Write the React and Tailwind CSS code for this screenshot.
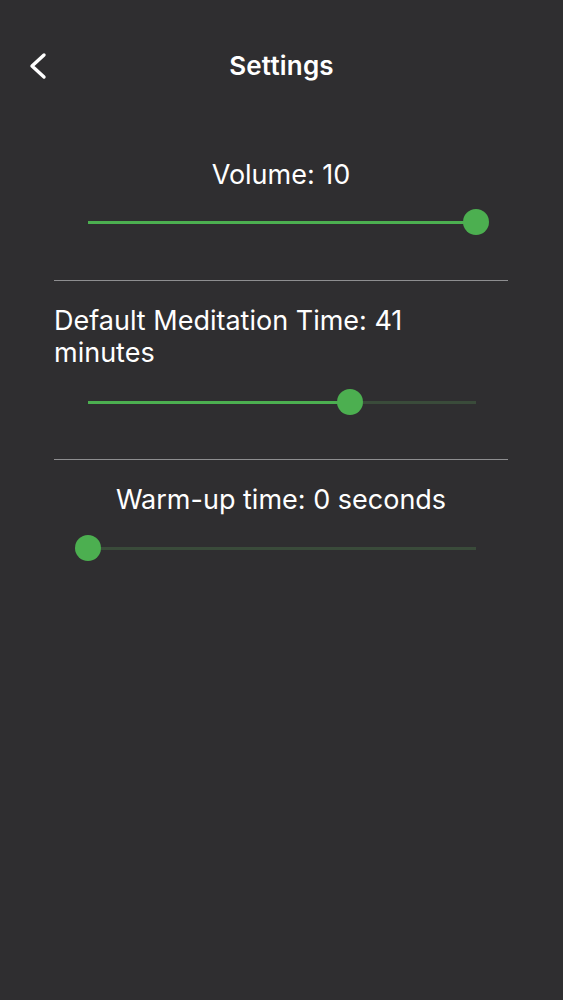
const font = { fontFamily: 'Inter, "Noto Sans", sans-serif' };

function Slider({ value }) {
  return (
    <div className="pl-[34px] pr-[32px]">
      <div className="relative flex h-[28px] items-center">
        <div className="flex h-[3px] w-full">
          <div className="h-full bg-[#4caf50]" style={{ width: `${value * 100}%` }} />
          <div className="h-full flex-1 bg-[#3a4b3a]" />
        </div>
        <span
          className="absolute top-px h-[26px] w-[26px] -translate-x-1/2 rounded-full bg-[#4caf50]"
          style={{ left: `${value * 100}%` }}
        />
      </div>
    </div>
  );
}

export default function App() {
  return (
    <div className="min-h-[1000px] bg-[#2f2e30] text-white" style={font}>
      <header className="relative flex h-[132px] items-center justify-center">
        <button className="absolute left-[28px] top-[52px] text-white">
          <svg width="20" height="28" viewBox="0 0 20 28" fill="none" stroke="currentColor" strokeWidth="3.4" strokeLinecap="round" strokeLinejoin="round">
            <path d="M16 3 4 14l12 11" />
          </svg>
        </button>
        <h1 className="-mt-[2px] text-[26px] font-semibold tracking-[0.2px]">Settings</h1>
      </header>

      <div className="ml-[54px] mr-[55px]">
        <section className="pt-[27px] pb-[44px]">
          <p className="text-center text-[27px] leading-[32px]">Volume: 10</p>
          <div className="mt-[17px]">
            <Slider value={1} />
          </div>
        </section>

        <div className="h-px bg-[#8e8e90]" />

        <section className="pt-[24px] pb-[43px]">
          <p className="text-[27px] leading-[32px]">
            Default Meditation Time: 41
            <br />
            minutes
          </p>
          <div className="mt-[19px]">
            <Slider value={0.675} />
          </div>
        </section>

        <div className="h-px bg-[#8e8e90]" />

        <section className="pt-[24px]">
          <p className="text-center text-[27px] leading-[32px]">Warm-up time: 0 seconds</p>
          <div className="mt-[18px]">
            <Slider value={0} />
          </div>
        </section>
      </div>
    </div>
  );
}
